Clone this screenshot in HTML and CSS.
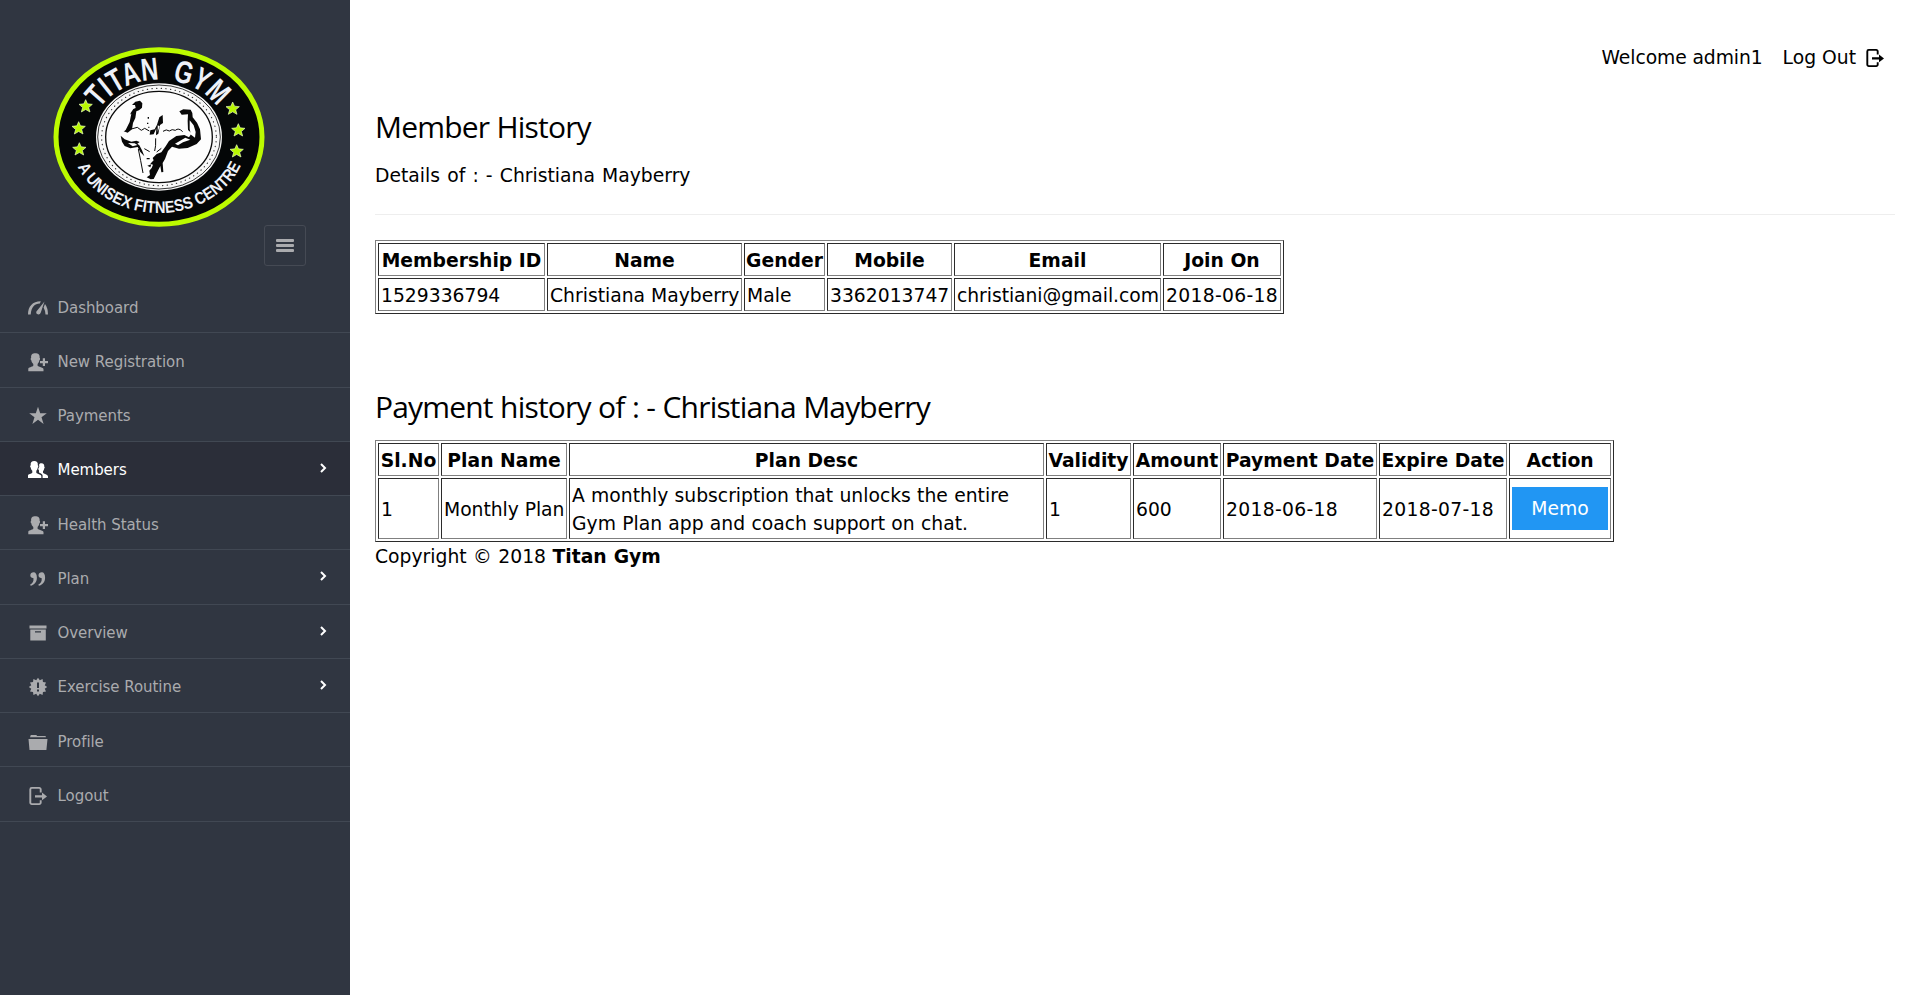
FILE: index.html
```
<!DOCTYPE html>
<html lang="en">
<head>
<meta charset="utf-8">
<title>Titan Gym | Member History</title>
<link rel="stylesheet" href="styles.css">
</head>
<body>
<svg class="defs" width="0" height="0">
  <symbol id="i-gauge" viewBox="0 0 20 20"><path d="M0 16.5C0 8.500 4.500 3.200 12.800 3.200l-.9 2.300C6.500 5.500 3.400 9 2.700 16.500zM16.500 3.400L12.800 14.600q-.6 2-2.500 1.900-2.700-.3-1.900-2.900zM17 5.900q2.900 3.700 3 10.600h-2.500q-.2-4-1.900-7z"/></symbol>
  <symbol id="i-adduser" viewBox="0 0 20 20"><path d="M.3 19.200v-2.500c0-1.300 4-1.700 5-2.900v-1.900C4 10.700 3.500 9.500 3.300 8.200c-.9-.5-.8-2.200-.1-2.500C2.700 2.600 4.500 1.200 7.300 1.200s4.800 1.400 4.300 4.500c.7.300.7 2-.2 2.500-.2 1.300-.7 2.500-1.800 3.700v1.900c1.200 1.200 5.900 1.600 5.900 3.500v1.900zM14.800 6.300H17V9h3v2.200h-3V14h-2.200v-2.800H12V9h2.800z"/></symbol>
  <symbol id="i-users" viewBox="0 0 20 20"><path d="M0 18v-2.600c0-1.300 3.600-1.700 4.300-2.700v-1.900C3.200 9.700 2.900 8.700 2.700 7.500c-.8-.5-.7-2 0-2.300C2.300 2.300 3.800 1 6.200 1s4 1.300 3.600 4.200c.7.300.7 1.800 0 2.300-.2 1.200-.5 2.200-1.500 3.300v1.900c.8 1.200 5 1.800 5 3.300v2zM14.600 18v-2.500c0-1.200-1.300-2.100-3.600-3v-2.200c-.7-.5-.8-1.500-.5-2.400.9-.6 1-2 .5-3 .3-1.300 1.300-1.700 2.500-1.700 2.100 0 3 1.300 2.700 3.300.7.400.6 1.600 0 2-.1 1-.5 2-1.200 2.700v1.600c.8 1.300 5 1.700 5 3.600V18z"/></symbol>
  <symbol id="i-star" viewBox="0 0 20 20"><path d="M10 .8l2.200 6.500h6.600l-5.300 4 2.100 6.700-5.600-4.200-5.600 4.200 2.100-6.700-5.300-4h6.600z"/></symbol>
  <symbol id="i-quote" viewBox="0 0 20 20"><path d="M5.700 3.300c-2 0-3.400 1.200-3.400 3 0 1.900 1.400 2.900 3.100 2.700.6 3.300-.8 5.400-3.200 6.400l.4 1.400c3.600-1 6.300-3.700 6.300-8.100 0-3.400-1.300-5.400-3.200-5.400zM13.900 3.300c-2 0-3.400 1.200-3.400 3 0 1.900 1.400 2.900 3.100 2.700.6 3.300-.8 5.400-3.200 6.400l.4 1.400c3.600-1 6.300-3.700 6.300-8.100 0-3.400-1.300-5.400-3.200-5.400z"/></symbol>
  <symbol id="i-archive" viewBox="0 0 20 20"><path d="M1.500 2.500h17v3h-17zM2.300 6.500h15.500v11H2.300zM7 8.300v1.200h6V8.300z" fill-rule="evenodd"/></symbol>
  <symbol id="i-burst" viewBox="0 0 20 20"><path fill-rule="evenodd" d="M10 .8L11.800 3.250 14.600 2 14.950 5.050 18 5.400 16.750 8.200 19.200 10 16.750 11.800 18 14.600 14.950 14.950 14.600 18 11.800 16.750 10 19.200 8.200 16.750 5.400 18 5.050 14.950 2 14.600 3.250 11.800.8 10 3.250 8.200 2 5.400 5.050 5.050 5.400 2 8.200 3.250zM9 5.500v5.500h2V5.500zm0 7v2h2v-2z"/></symbol>
  <symbol id="i-folder" viewBox="0 0 20 20"><path d="M2 5.200L2.800 3h5.500l.8 1h8.400l.5 1.200zM.5 7h19l-1.100 11H1.500z"/></symbol>
  <symbol id="i-logout" viewBox="0 0 20 20"><path d="M12.700 6.500V3.400a1.500 1.500 0 0 0-1.500-1.500H3.800a1.500 1.500 0 0 0-1.500 1.500v13.200a1.500 1.500 0 0 0 1.500 1.500h7.400a1.500 1.500 0 0 0 1.500-1.500v-2.300" fill="none" stroke="currentColor" stroke-width="1.900"/><path d="M7 9.300h7V6.500l5 3.900-5 3.900v-2.700H7z"/></symbol>
  <symbol id="i-chevron" viewBox="0 0 7 10"><path d="M1 1l4 4-4 4" fill="none" stroke="currentColor" stroke-width="2"/></symbol>
  <symbol id="l-star" viewBox="-22 -22 44 44"><path d="M0-19L5.500-6.500 20-5 9 4.500 13 18 0 10.500-13 18-9 4.500-20-5-5.500-6.500z" fill="#b9f800" stroke="#e8ffc0" stroke-width="2"/></symbol>
</svg>
<div class="page">
  <aside class="sidebar">
    <header class="brand">
      <svg class="logo" viewBox="39 50 636 540" width="212" height="180">
        <defs>
          <path id="arc-top" d="M152 320A205 172 0 0 1 562 320"/>
          <path id="arc-bottom" d="M92 320A265 228 0 0 0 622 320"/>
        </defs>
        <ellipse cx="357" cy="320" rx="309" ry="262" fill="#040607" stroke="#bcfb00" stroke-width="15"/>
        <ellipse cx="357" cy="320" rx="189" ry="161" fill="#f8f8f8"/>
        <ellipse cx="357" cy="320" rx="184" ry="156" fill="none" stroke="#111" stroke-width="2.500"/>
        <ellipse cx="357" cy="320" rx="172" ry="146" fill="none" stroke="#333" stroke-width="3.500" stroke-linecap="round" stroke-dasharray="1 13"/>
        <ellipse cx="357" cy="320" rx="160" ry="137" fill="#fdfdfd" stroke="#0a0a0a" stroke-width="4"/>
        <text class="logo-title"><textPath href="#arc-top" startOffset="91" textLength="206" lengthAdjust="spacingAndGlyphs">TITAN</textPath></text>
        <text class="logo-title"><textPath href="#arc-top" startOffset="336" textLength="160" lengthAdjust="spacingAndGlyphs">GYM</textPath></text>
        <text class="logo-tag"><textPath href="#arc-bottom" startOffset="92" textLength="595" lengthAdjust="spacingAndGlyphs">A UNISEX FITNESS CENTRE</textPath></text>
        <use href="#l-star" x="115" y="205" width="44" height="44"/>
        <use href="#l-star" x="94" y="271" width="44" height="44"/>
        <use href="#l-star" x="96" y="334" width="44" height="44"/>
        <use href="#l-star" x="556" y="212" width="44" height="44"/>
        <use href="#l-star" x="573" y="277" width="44" height="44"/>
        <use href="#l-star" x="568" y="340" width="44" height="44"/>
        <g fill="#080808">
          <path d="M276 224l10-10 14-3 7 8-1 13-9 8-8 3-3 20-7 15-3 19-13 10-12-4 10-16 6-16 5-23 8-12 7-3-2-9z"/>
          <path d="M268 254l6-4-5 25-12 24-8 6 8-19z" fill="#fdfdfd"/>
          <path d="M242 316l12 11 20 7 15-3 10 4-7 5 6 5 8 15 7 18-12-13-8-15-22 4-17-7-8-13z"/>
          <path d="M264 338l20 1 8 5-14 4z" fill="#fdfdfd"/>
          <path d="M418 243l12-6 22 1 5 10 1 13 13 16 9 20 3 30-13 14-27 12-26 2-21-6-12 13-9 24-7 12 2 27-6 1-3-19-12 23-8 16-9 1-12-6 10-7-2-13 7-8 4-10-8-3 10-10-3-7 12-12 14-5 13-18 10-16 22-15 24-3 14 7 8-12-11-10-1-27 1-20-19 1z"/>
          <path d="M449 270l12 15 6 20-2 17-12-9-4-17zM436 322l15 6-22 8-15 9-9-5z" fill="#fdfdfd"/>
          <path d="M331 300l13-3 7-14 7-22 10-7 1 24-9 6-5 26-7 5 1-21-8 18-12 1z"/>
          <path d="M353 285l6 3-6 17z" fill="#fdfdfd"/>
          <path d="M323 260h4v5h-4zm-2 17h4v4h-4zm4 12h3v4h-3zM320 383h9v4h-9zm2 23l12-4-3 9zm22-20l8-5 5 4-11 5z"/>
          <path d="M274 296l18-5 12 9 10-6 14 8M369 303q10-8 19-1 8-7 18-2 10-9 22 4M347 324q1 25-3 38M329 364l-16-9M295 356l7 35 7 37M350 365l14-11" fill="none" stroke="#080808" stroke-width="3"/>
        </g>
      </svg>
      <a class="collapse" href="#"><i></i><i></i><i></i></a>
    </header>
    <nav class="menu">
      <a href="#"><svg class="ico"><use href="#i-gauge"/></svg><span>Dashboard</span></a>
      <a href="#"><svg class="ico"><use href="#i-adduser"/></svg><span>New Registration</span></a>
      <a href="#"><svg class="ico"><use href="#i-star"/></svg><span>Payments</span></a>
      <a href="#" class="active"><svg class="ico"><use href="#i-users"/></svg><span>Members</span><svg class="chev"><use href="#i-chevron"/></svg></a>
      <a href="#"><svg class="ico"><use href="#i-adduser"/></svg><span>Health Status</span></a>
      <a href="#"><svg class="ico"><use href="#i-quote"/></svg><span>Plan</span><svg class="chev"><use href="#i-chevron"/></svg></a>
      <a href="#"><svg class="ico"><use href="#i-archive"/></svg><span>Overview</span><svg class="chev"><use href="#i-chevron"/></svg></a>
      <a href="#"><svg class="ico"><use href="#i-burst"/></svg><span>Exercise Routine</span><svg class="chev"><use href="#i-chevron"/></svg></a>
      <a href="#"><svg class="ico"><use href="#i-folder"/></svg><span>Profile</span></a>
      <a href="#"><svg class="ico"><use href="#i-logout"/></svg><span>Logout</span></a>
    </nav>
  </aside>
  <main class="content">
    <div class="topbar"><span>Welcome admin1</span><a href="#">Log Out <svg class="ico"><use href="#i-logout"/></svg></a></div>
    <h2>Member History</h2>
    <p class="details">Details of : - Christiana Mayberry</p>
    <hr>
    <table class="grid member">
      <colgroup><col class="c-id"><col class="c-name"><col class="c-gender"><col class="c-mobile"><col class="c-email"><col class="c-join"></colgroup>
      <tr><th>Membership ID</th><th>Name</th><th>Gender</th><th>Mobile</th><th>Email</th><th>Join On</th></tr>
      <tr><td>1529336794</td><td>Christiana Mayberry</td><td>Male</td><td>3362013747</td><td class="email">christiani@gmail.com</td><td class="date">2018-06-18</td></tr>
    </table>
    <h2 class="second">Payment history of : - Christiana Mayberry</h2>
    <table class="grid payments">
      <colgroup><col class="c-sl"><col class="c-plan"><col class="c-desc"><col class="c-valid"><col class="c-amount"><col class="c-paid"><col class="c-expire"><col class="c-action"></colgroup>
      <tr><th>Sl.No</th><th>Plan Name</th><th>Plan Desc</th><th>Validity</th><th>Amount</th><th>Payment Date</th><th>Expire Date</th><th>Action</th></tr>
      <tr class="tall"><td>1</td><td class="plan">Monthly Plan</td><td class="desc">A monthly subscription that unlocks the entire<br>Gym Plan app and coach support on chat.</td><td>1</td><td>600</td><td class="date">2018-06-18</td><td class="date">2018-07-18</td><td class="action"><a class="memo" href="#">Memo</a></td></tr>
    </table>
    <footer>Copyright © 2018 <strong>Titan Gym</strong></footer>
  </main>
</div>
</body>
</html>
```
FILE: styles.css
```
* { box-sizing: border-box; }
body { margin: 0; background: #fff; color: #000; font: 18.75px/28px "DejaVu Sans", Verdana, sans-serif; }
a { color: inherit; text-decoration: none; }
.defs { position: absolute; }
.page { display: flex; min-height: 995px; }

.sidebar { width: 350px; flex: none; background: #303641; }
.brand { display: flex; align-items: flex-end; height: 266px; padding-left: 53px; }
.logo { flex: none; margin-bottom: 39px; margin-right: -1px; }
.logo-title { font: bold 95px "Liberation Sans", sans-serif; fill: #eef1f8; }
.logo-tag { font: bold 50px "Liberation Sans", sans-serif; fill: #eef1f8; }
.collapse { width: 42px; height: 41px; border: 1px solid #454a54; border-radius: 3px; display: flex; flex-direction: column; align-items: center; justify-content: center; gap: 2px; }
.collapse i { width: 18px; height: 3px; border-radius: 1px; background: #aaabae; }

.menu { margin-top: 13px; color: #aaabae; font-size: 15px; letter-spacing: -0.05px; }
.menu a { display: flex; align-items: center; height: 54.25px; padding: 4px 23px 0 28px; border-bottom: 1px solid #414853; }
.menu .active { background: #2b2e39; color: #fff; }
.ico { width: 20px; height: 20px; flex: none; fill: currentColor; }
.menu .ico { margin-right: 9.5px; }
.chev { width: 7px; height: 10px; margin: -5px 0 0 auto; color: #fff; }

.content { flex: 1; padding: 44px 25px 0; }
.topbar { display: flex; justify-content: flex-end; gap: 20px; padding-right: 10px; }
.topbar span { letter-spacing: -0.1px; }
.topbar a { display: flex; align-items: center; gap: 9px; }
h2 { margin: 32px 0 0; font: 400 30px/45px "Open Sans", "Segoe UI", sans-serif; letter-spacing: -0.82px; word-spacing: 0.4px; }
.details { margin: 13px 0 0; word-spacing: 1.2px; }
hr { margin: 24px 0 25px; border: 0; border-top: 1px solid #eee; }
.second { margin-top: 70px; }

.grid { table-layout: fixed; border: 1px solid; border-color: #808080 #2b2b2b #2b2b2b #808080; border-spacing: 2px; border-collapse: separate; }
.grid th, .grid td { height: 33px; padding: 2px 1px 0; border: 1px solid; border-color: #2b2b2b #808080 #808080 #2b2b2b; line-height: 28px; white-space: nowrap; }
.grid td { padding-left: 2px; text-align: left; }
.grid .email { letter-spacing: -0.05px; }
.grid .tall td { height: 61px; }
.grid .date { letter-spacing: 0.3px; }
.grid .desc { word-spacing: 0.3px; }
.grid .plan { letter-spacing: -0.05px; }
.grid .tall .action { padding: 0 1px; }
.member { width: 909px; }
.c-id { width: 167px; } .c-name { width: 195px; } .c-gender { width: 81px; }
.c-mobile { width: 125px; } .c-email { width: 207px; } .c-join { width: 118px; }
.payments { width: 1239px; margin-top: 11px; }
.c-sl { width: 61px; } .c-plan { width: 126px; } .c-desc { width: 475px; } .c-valid { width: 85px; }
.c-amount { width: 88px; } .c-paid { width: 154px; } .c-expire { width: 128px; } .c-action { width: 102px; }
.memo { display: block; width: 96px; height: 43px; margin-left: 1px; background: #2196f3; color: #fff; line-height: 43px; text-align: center; }
footer { padding-top: 1px; word-spacing: 0.5px; }
```
